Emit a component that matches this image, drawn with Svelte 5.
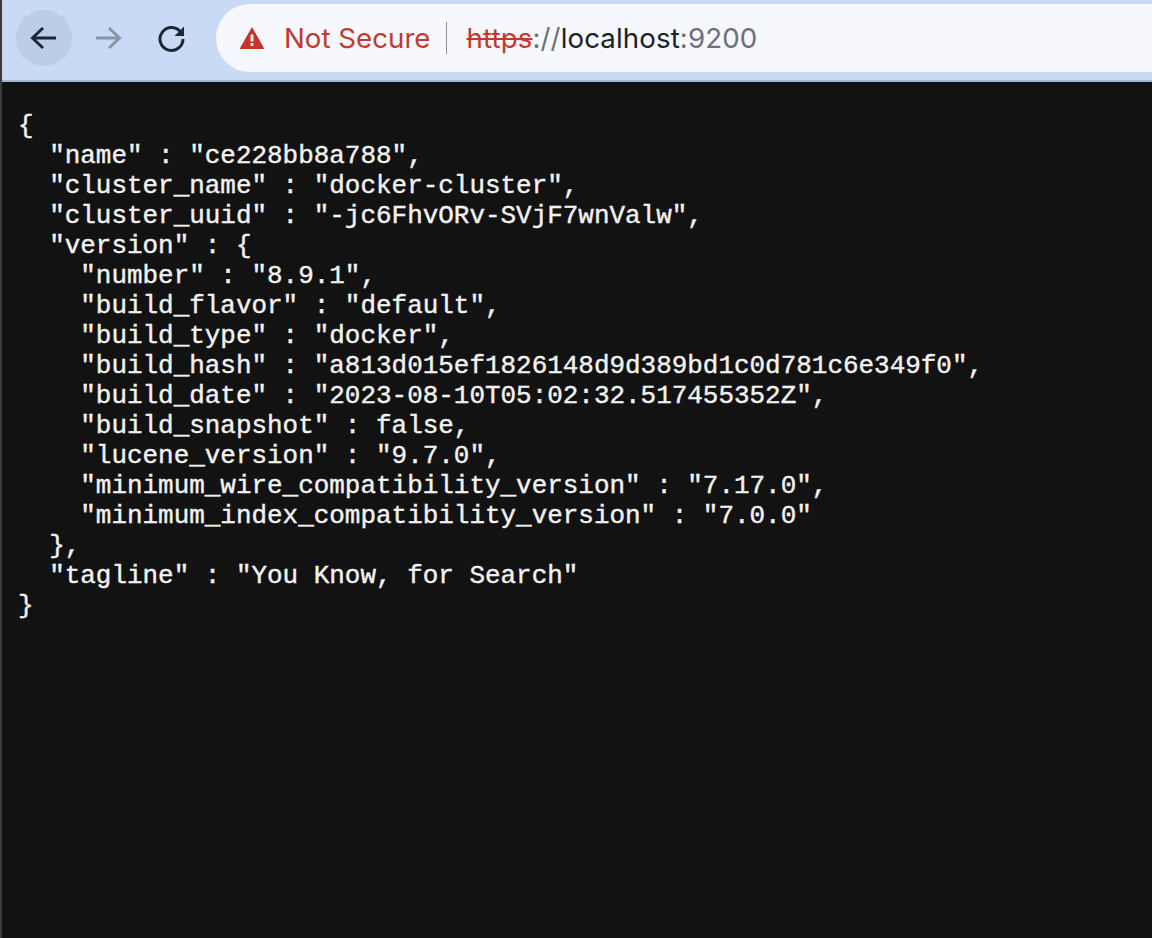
<script>
	const json = `{
  "name" : "ce228bb8a788",
  "cluster_name" : "docker-cluster",
  "cluster_uuid" : "-jc6FhvORv-SVjF7wnValw",
  "version" : {
    "number" : "8.9.1",
    "build_flavor" : "default",
    "build_type" : "docker",
    "build_hash" : "a813d015ef1826148d9d389bd1c0d781c6e349f0",
    "build_date" : "2023-08-10T05:02:32.517455352Z",
    "build_snapshot" : false,
    "lucene_version" : "9.7.0",
    "minimum_wire_compatibility_version" : "7.17.0",
    "minimum_index_compatibility_version" : "7.0.0"
  },
  "tagline" : "You Know, for Search"
}`;
</script>

<div class="window">
	<header class="toolbar">
		<div class="nav">
			<button class="navbtn back" aria-label="Back">
				<svg width="30" height="30" viewBox="0 0 30 30"><path d="M27 15H4M14 5L3.5 15 14 25" /></svg>
			</button>
			<button class="navbtn forward" aria-label="Forward">
				<svg width="30" height="30" viewBox="0 0 30 30"><path d="M3 15h23M16 5l10.5 10L16 25" /></svg>
			</button>
			<button class="navbtn reload" aria-label="Reload">
				<svg width="30" height="30" viewBox="0 0 30 30">
					<path d="M24 9.5A11.5 11.5 0 1 0 26 16" />
					<polygon points="27,3.5 27,13 17.5,13" />
				</svg>
			</button>
		</div>
		<div class="omnibox">
			<svg class="warn" width="26" height="24" viewBox="0 0 26 24">
				<path d="M13 1L25.5 23H.5Z" />
				<rect x="11.6" y="8.5" width="2.8" height="7" />
				<rect x="11.6" y="17" width="2.8" height="3" />
			</svg>
			<span class="secure">Not Secure</span>
			<span class="sep"></span>
			<span class="url"><s>https</s><span class="dim">://</span>localhost<span class="dim">:9200</span></span>
		</div>
	</header>
	<pre>{json}</pre>
</div>

<style>
	:global(body) {
		background: #121212;
	}

	.window {
		display: flex;
		flex-direction: column;
		height: 938px;
		overflow: hidden;
		background: #121212;
		border-left: 2px solid #3b3b3b;
		box-sizing: border-box;
	}

	.toolbar {
		display: flex;
		align-items: center;
		gap: 16px;
		height: 82px;
		margin-left: -2px;
		padding: 4px 0 8px 16px;
		box-sizing: border-box;
		background: #c9daf5;
		border-bottom: 2px solid #a9b6d0;
	}

	.nav {
		display: flex;
		gap: 8px;
	}

	.navbtn {
		display: flex;
		align-items: center;
		justify-content: center;
		width: 56px;
		height: 56px;
		padding: 0;
		border: none;
		border-radius: 50%;
		background: transparent;
	}

	.navbtn.back {
		background: #bccde6;
	}

	.navbtn path {
		fill: none;
		stroke: #1c2733;
		stroke-width: 3;
	}

	.navbtn polygon {
		fill: #1c2733;
	}

	.navbtn.forward path {
		stroke: #8894a6;
	}

	.omnibox {
		flex: 1;
		display: flex;
		align-items: center;
		height: 68px;
		padding-left: 23px;
		border-radius: 34px 0 0 34px;
		background: #f6f8fd;
		font-family: Inter, "Liberation Sans", sans-serif;
		font-size: 27.7px;
		line-height: 34px;
	}

	.warn path {
		fill: #c5352b;
	}

	.warn rect {
		fill: #f6f8fd;
	}

	.secure {
		margin-left: 19px;
		color: #bf3a30;
	}

	.sep {
		width: 1px;
		height: 32px;
		margin: 0 20px 0 15px;
		background: #8b8f96;
	}

	.url {
		color: #1e2126;
		letter-spacing: 0.1px;
	}

	.url s {
		color: #bf3a30;
	}

	.dim {
		color: #6d7177;
	}

	pre {
		margin: 0;
		padding: 29px 0 0 16px;
		color: #f2f2f2;
		font-family: "Liberation Mono", monospace;
		font-size: 25.95px;
		line-height: 30px;
		-webkit-text-stroke: 0.4px #f2f2f2;
	}
</style>
